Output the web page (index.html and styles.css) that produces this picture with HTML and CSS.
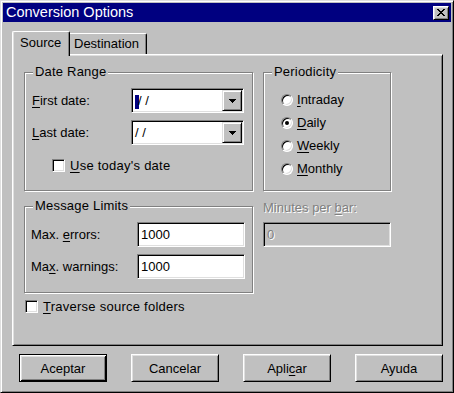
FILE: index.html
```html
<!DOCTYPE html>
<html lang="en">
<head>
    <meta charset="UTF-8">
    <title>Conversion Options</title>
    <link rel="stylesheet" href="styles.css">
</head>
<body>
<div class="window">
    <div class="titlebar">
        <span class="title">Conversion Options</span>
        <span class="close">
            <svg width="8" height="7" viewBox="0 0 8 7"><path d="M0 0h2v1H0zM6 0h2v1H6zM1 1h2v1H1zM5 1h2v1H5zM2 2h4v1H2zM3 3h2v1H3zM2 4h4v1H2zM1 5h2v1H1zM5 5h2v1H5zM0 6h2v1H0zM6 6h2v1H6z" fill="#000"/></svg>
        </span>
    </div>
    <div class="client">
        <div class="tabs">
            <div class="tab active">Source</div>
            <div class="tab">Destination</div>
        </div>
        <div class="panel">
            <!-- left column -->
            <div class="col col-left">
                <div class="group date-range">
                    <div class="group-title">Date Range</div>
                    <div class="row first-row">
                        <span class="lbl lbl-date"><u>F</u>irst date:</span>
                        <div class="field combo">
                            <span class="value"><span class="sel">&nbsp;</span>/ /</span>
                            <span class="drop">
                                <svg width="7" height="4" viewBox="0 0 7 4"><path d="M0 0h7v1H0zM1 1h5v1H1zM2 2h3v1H2zM3 3h1v1H3z" fill="#000"/></svg>
                            </span>
                        </div>
                    </div>
                    <div class="row">
                        <span class="lbl lbl-date"><u>L</u>ast date:</span>
                        <div class="field combo">
                            <span class="value">/ /</span>
                            <span class="drop">
                                <svg width="7" height="4" viewBox="0 0 7 4"><path d="M0 0h7v1H0zM1 1h5v1H1zM2 2h3v1H2zM3 3h1v1H3z" fill="#000"/></svg>
                            </span>
                        </div>
                    </div>
                    <div class="check today">
                        <span class="box"></span>
                        <span><u>U</u>se today's date</span>
                    </div>
                </div>

                <div class="group limits">
                    <div class="group-title">Message Limits</div>
                    <div class="row first-row">
                        <span class="lbl lbl-limit">Max. <u>e</u>rrors:</span>
                        <div class="field edit"><span class="value">1000</span></div>
                    </div>
                    <div class="row">
                        <span class="lbl lbl-limit">Ma<u>x</u>. warnings:</span>
                        <div class="field edit"><span class="value">1000</span></div>
                    </div>
                </div>

                <div class="check traverse">
                    <span class="box"></span>
                    <span><u>T</u>raverse source folders</span>
                </div>
            </div>

            <!-- right column -->
            <div class="col col-right">
                <div class="group periodicity">
                    <div class="group-title">Periodicity</div>
                    <div class="radios">
                        <div class="radio"><span class="dot"></span><span><u>I</u>ntraday</span></div>
                        <div class="radio checked"><span class="dot"></span><span><u>D</u>aily</span></div>
                        <div class="radio"><span class="dot"></span><span><u>W</u>eekly</span></div>
                        <div class="radio"><span class="dot"></span><span><u>M</u>onthly</span></div>
                    </div>
                </div>
                <div class="disabled minutes-lbl">Minutes per <u>b</u>ar:</div>
                <div class="field minutes"><span class="value">0</span></div>
            </div>
        </div>
        <div class="buttons">
            <div class="btn default">Aceptar</div>
            <div class="btn">Cancelar</div>
            <div class="btn">Apli<u>c</u>ar</div>
            <div class="btn">Ayuda</div>
        </div>
    </div>
</div>
</body>
</html>
```

FILE: styles.css
```css
@charset "UTF-8";
/* reset */
body,div,span,u{margin:0;padding:0}
body{font:13px/15px "Liberation Sans", Arial, sans-serif;color:#000;background:#c0c0c0;}
u{text-decoration:underline;text-underline-offset:2px;}

.window{
    width:454px;
    height:393px;
    box-sizing:border-box;
    padding:2px;
    background:#c0c0c0;
    border:1px solid;
    border-color:#dfdfdf #000 #000 #dfdfdf;
    box-shadow:inset 1px 1px #fff, inset -1px -1px #808080;
}

/* title bar */
.titlebar{
    height:19px;
    background:#000080;
    color:#fff;
    display:flex;
    align-items:center;
    padding:0 2px 0 3px;
}
.title{
    flex:1;
    font-size:14.5px;
    line-height:19px;
}
.close{
    width:16px;
    height:14px;
    box-sizing:border-box;
    background:#c0c0c0;
    border:1px solid;
    border-color:#fff #000 #000 #fff;
    box-shadow:inset 1px 1px #dfdfdf, inset -1px -1px #808080;
    display:flex;
    align-items:center;
    justify-content:center;
    padding:0 1px 1px 0;
}
.close svg{display:block;}

/* client area */
.client{
    display:flex;
    flex-direction:column;
    padding:9px 0 0 9px;
}

/* tabs */
.tabs{
    display:flex;
    height:23px;
    z-index:1;
}
.tab{
    box-sizing:border-box;
    height:21px;
    margin-top:2px;
    background:#c0c0c0;
    border-top:1px solid #fff;
    border-right:1px solid #000;
    border-top-right-radius:2px;
    box-shadow:inset -1px 0 #808080;
    padding:2px 0 0 4px;
    width:77px;
}
.tab.active{
    width:58px;
    height:25px;
    margin-top:0;
    margin-bottom:-2px;
    border-left:1px solid #fff;
    border-top-left-radius:2px;
    box-shadow:inset 1px 0 #dfdfdf, inset -1px 0 #808080;
    padding:3px 0 0 7px;
}

/* tab page */
.panel{
    width:431px;
    height:292px;
    box-sizing:border-box;
    border:1px solid;
    border-color:#fff #000 #000 #fff;
    box-shadow:inset 1px 1px #dfdfdf, inset -1px -1px #808080;
    display:flex;
    gap:10px;
    padding:17px 0 0 11px;
}
.col{
    display:flex;
    flex-direction:column;
}
.col-left{width:229px;}
.col-right{width:128px;}

/* group boxes */
.group{
    box-sizing:border-box;
    border:1px solid #808080;
    box-shadow:inset 1px 1px #fff, 1px 1px #fff;
    display:flex;
    flex-direction:column;
}
.group-title{
    align-self:flex-start;
    margin:-9px 0 0 8px;
    padding:0 2px;
    background:#c0c0c0;
    line-height:15px;
    letter-spacing:0.2px;
}
.date-range{height:119px;}
.periodicity{height:119px;}
.limits{
    height:87px;
    margin-top:15px;
}

.row{
    display:flex;
    align-items:center;
    height:25px;
    margin-top:7px;
}
.row.first-row{margin-top:9px;}
.lbl-date{
    width:99px;
    padding-left:7px;
}
.lbl-limit{
    width:106px;
    padding-left:6px;
}

/* sunken fields */
.field{
    box-sizing:border-box;
    height:25px;
    background:#fff;
    border:1px solid;
    border-color:#808080 #fff #fff #808080;
    box-shadow:inset 1px 1px #000, inset -1px -1px #dfdfdf;
    display:flex;
    align-items:center;
    padding:1px;
}
.field .value{
    flex:1;
    padding-left:2px;
}
.combo{width:113px;}
.combo .value{padding-left:2px;}
.edit{width:108px;}
.sel{
    display:inline-block;
    width:4px;
    height:14px;
    background:#000080;
    vertical-align:-2px;
    margin-right:-1px;
}
.drop{
    width:20px;
    height:21px;
    box-sizing:border-box;
    background:#c0c0c0;
    border:1px solid;
    border-color:#dfdfdf #000 #000 #dfdfdf;
    box-shadow:inset 1px 1px #fff, inset -1px -1px #808080;
    display:flex;
    align-items:center;
    justify-content:center;
}
.drop svg{display:block;}

/* checkbox */
.check{
    display:flex;
    align-items:center;
    height:15px;
    gap:5px;
    letter-spacing:0.25px;
}
.check .box{
    width:13px;
    height:13px;
    box-sizing:border-box;
    background:#fff;
    border:1px solid;
    border-color:#808080 #fff #fff #808080;
    box-shadow:inset 1px 1px #000, inset -1px -1px #dfdfdf;
}
.today{
    margin-top:13px;
    padding-left:27px;
}
.traverse{
    margin-top:6px;
    padding-left:1px;
}

/* radio buttons */
.radios{
    margin-top:9px;
    padding-left:17px;
}
.radio{
    display:flex;
    align-items:center;
    height:23px;
    gap:4px;
}
.radio .dot{
    width:12px;
    height:12px;
    box-sizing:border-box;
    border-radius:50%;
    background:#fff;
    border:1px solid;
    border-color:#808080 #fff #fff #808080;
    box-shadow:inset 1px 1px #000, inset -1px -1px #dfdfdf;
    display:flex;
    align-items:center;
    justify-content:center;
}
.radio.checked .dot::after{
    content:"";
    width:4px;
    height:4px;
    border-radius:50%;
    background:#000;
}

/* disabled */
.disabled,.minutes .value{
    color:#808080;
    text-shadow:1px 1px #fff;
}
.minutes-lbl{margin-top:9px;}
.minutes{
    width:128px;
    margin-top:7px;
    background:#c0c0c0;
}

/* buttons */
.buttons{
    display:flex;
    justify-content:space-between;
    width:424px;
    margin:8px 0 0 7px;
}
.btn{
    width:88px;
    height:28px;
    box-sizing:border-box;
    border:1px solid;
    border-color:#fff #000 #000 #fff;
    box-shadow:inset 1px 1px #dfdfdf, inset -1px -1px #808080;
    display:flex;
    align-items:center;
    justify-content:center;
}
.btn.default{
    border:1px solid #000;
    box-shadow:inset 1px 1px #fff, inset -1px -1px #000, inset 2px 2px #dfdfdf, inset -2px -2px #808080;
}
```
